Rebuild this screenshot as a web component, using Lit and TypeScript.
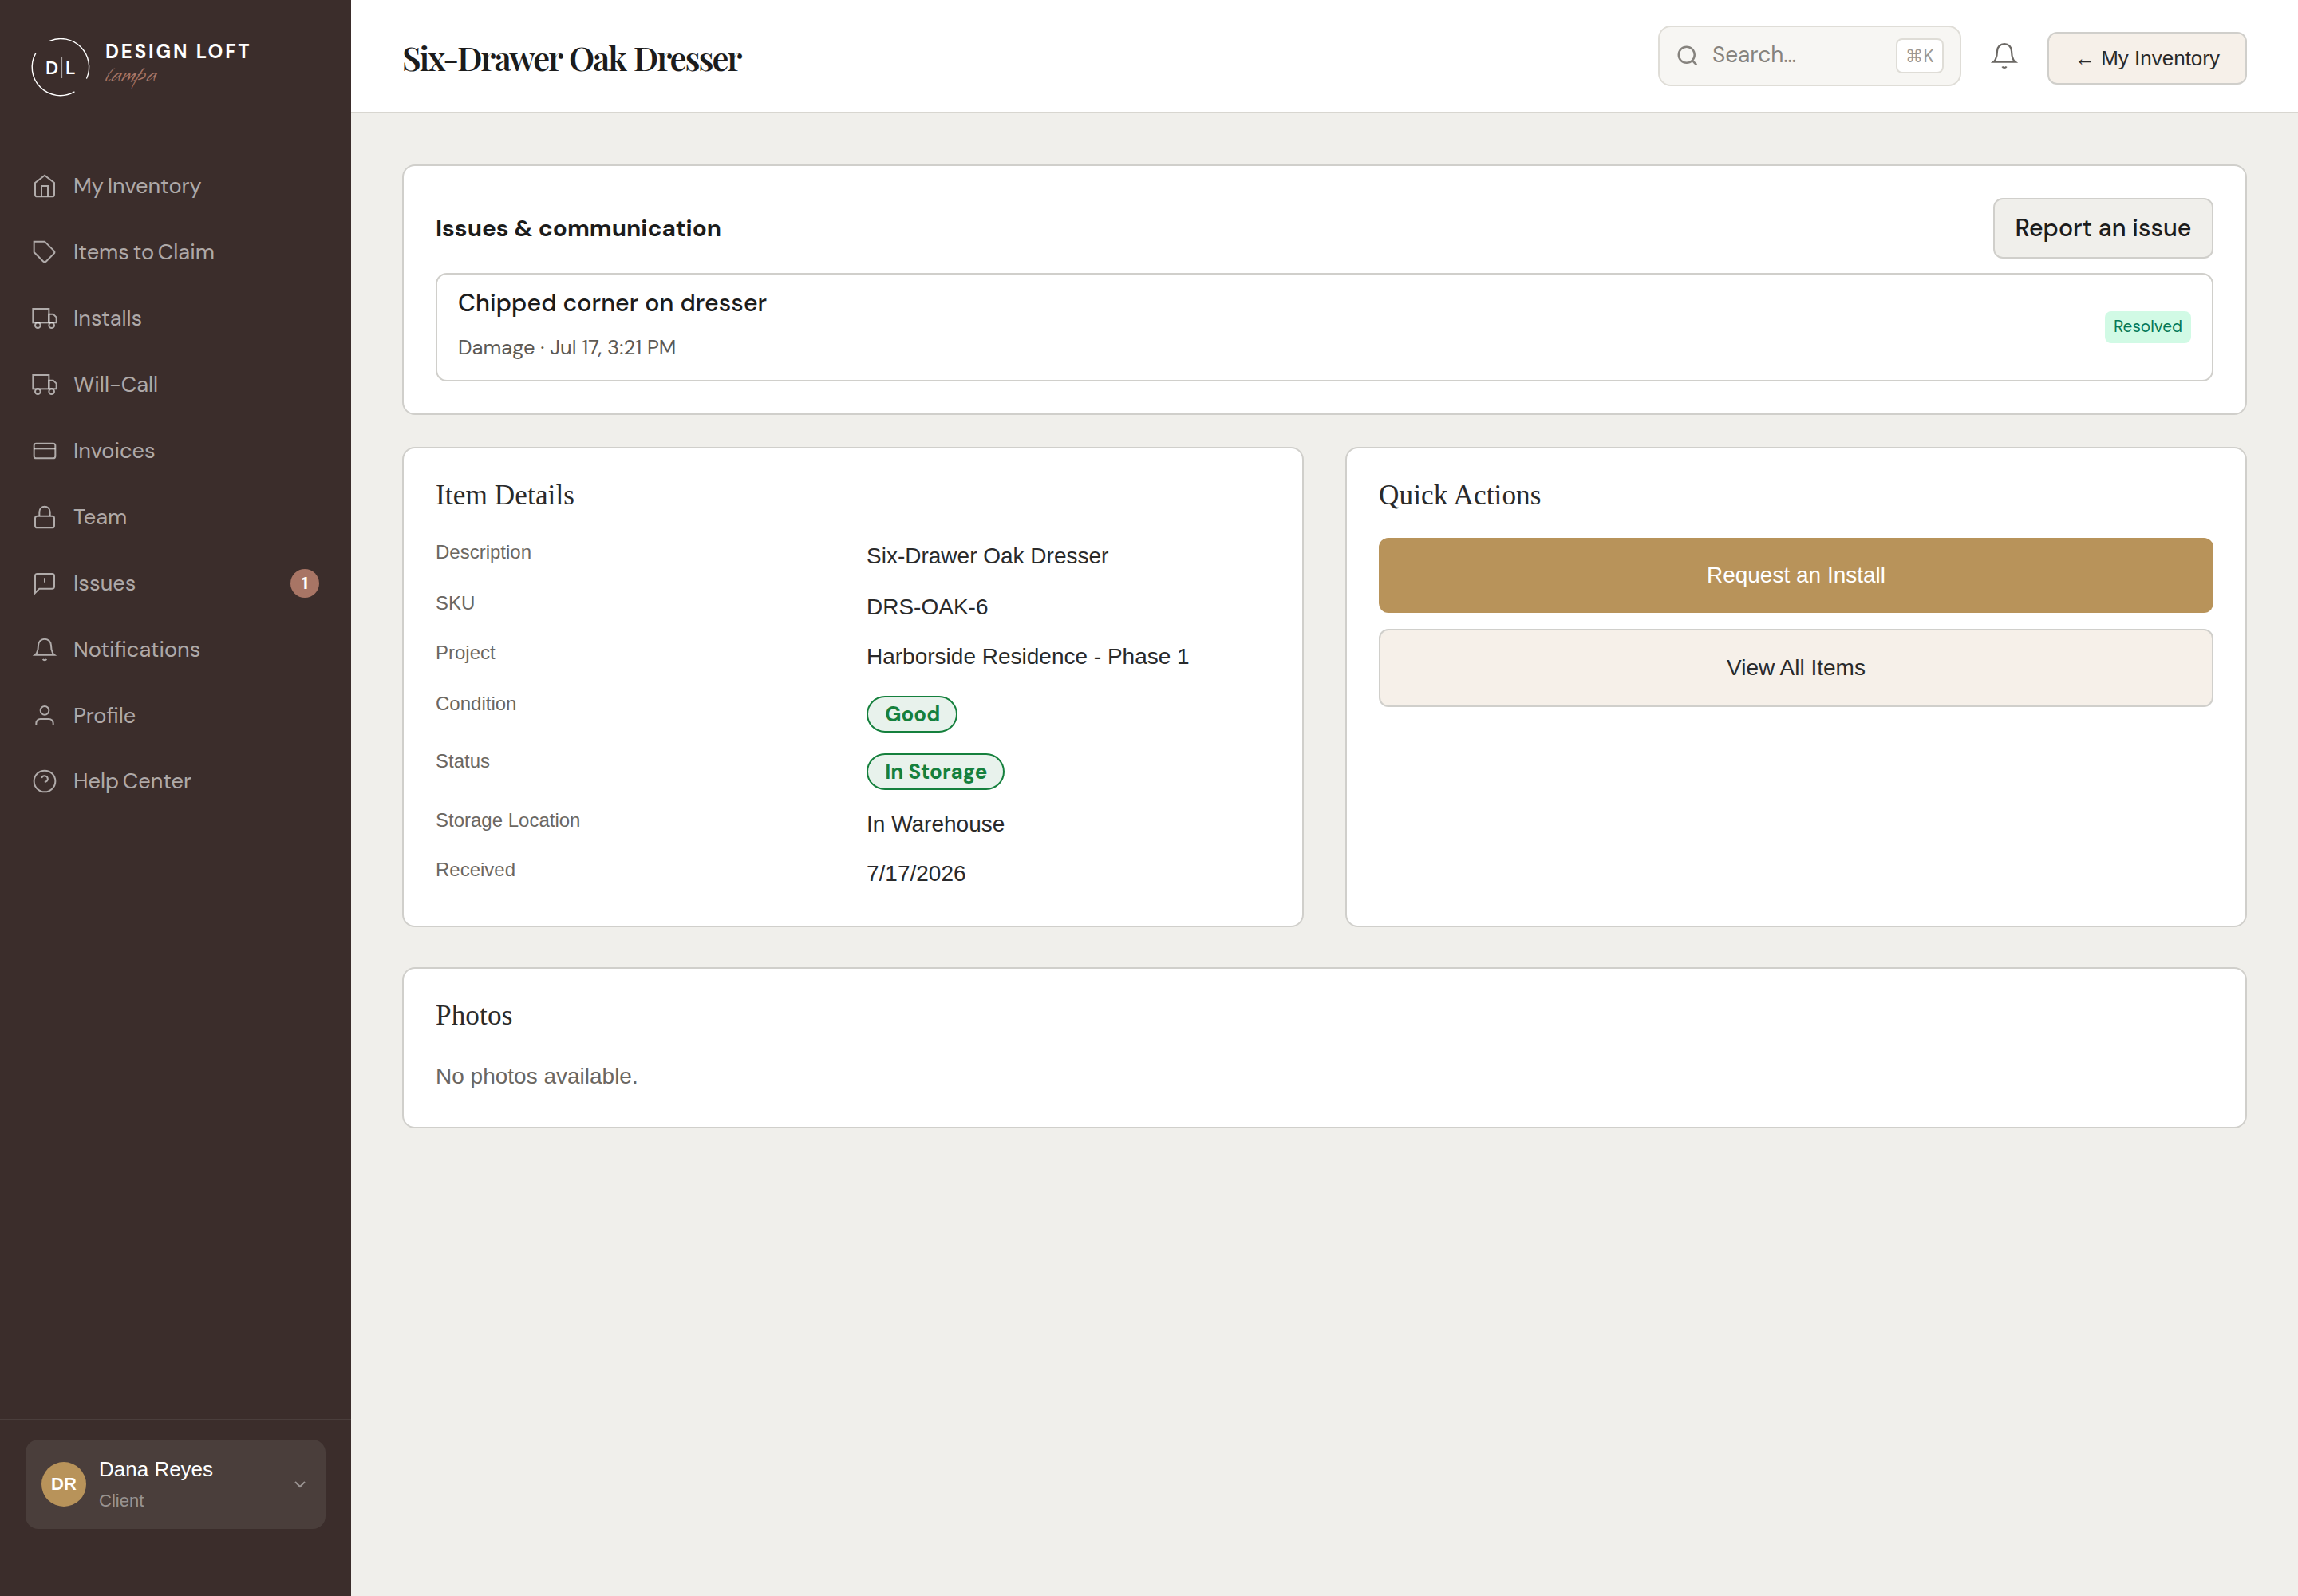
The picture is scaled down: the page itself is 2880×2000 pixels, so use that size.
import { LitElement, html, svg, css } from "lit";

const icons: Record<string, unknown> = {
  home: svg`<path d="M3 9l9-7 9 7v11a2 2 0 0 1-2 2H5a2 2 0 0 1-2-2z"/><polyline points="9 22 9 12 15 12 15 22"/>`,
  tag: svg`<path d="M20.59 13.41l-7.17 7.17a2 2 0 0 1-2.83 0L2 12V2h10l8.59 8.59a2 2 0 0 1 0 2.82z"/>`,
  truck: svg`<rect x="1" y="3" width="15" height="13"/><polygon points="16 8 20 8 23 11 23 16 16 16 16 8"/><circle cx="5.5" cy="18.5" r="2.5"/><circle cx="18.5" cy="18.5" r="2.5"/>`,
  card: svg`<rect x="2" y="5" width="20" height="14" rx="2"/><line x1="2" y1="10" x2="22" y2="10"/>`,
  lock: svg`<rect x="3" y="11" width="18" height="11" rx="2"/><path d="M7 11V7a5 5 0 0 1 10 0v4"/>`,
  issue: svg`<path d="M21 15a2 2 0 0 1-2 2H7l-4 4V5a2 2 0 0 1 2-2h14a2 2 0 0 1 2 2z"/><line x1="12" y1="7" x2="12" y2="11"/>`,
  bell: svg`<path d="M18 8A6 6 0 0 0 6 8c0 7-3 9-3 9h18s-3-2-3-9"/><path d="M13.73 21a2 2 0 0 1-3.46 0"/>`,
  user: svg`<path d="M20 21v-2a4 4 0 0 0-4-4H8a4 4 0 0 0-4 4v2"/><circle cx="12" cy="7" r="4"/>`,
  help: svg`<circle cx="12" cy="12" r="10"/><path d="M9.09 9a3 3 0 0 1 5.83 1c0 2-3 3-3 3"/>`,
  search: svg`<circle cx="11" cy="11" r="8"/><line x1="21" y1="21" x2="16.65" y2="16.65"/>`,
  chevron: svg`<polyline points="6 9 12 15 18 9"/>`,
};

const icon = (name: string, cls: string) =>
  html`<svg class="icon ${cls}" viewBox="0 0 24 24" aria-hidden="true">${icons[name]}</svg>`;

const nav = [
  { icon: "home", label: "My Inventory" },
  { icon: "tag", label: "Items to Claim" },
  { icon: "truck", label: "Installs" },
  { icon: "truck", label: "Will-Call" },
  { icon: "card", label: "Invoices" },
  { icon: "lock", label: "Team" },
  { icon: "issue", label: "Issues", badge: 1 },
  { icon: "bell", label: "Notifications" },
  { icon: "user", label: "Profile" },
  { icon: "help", label: "Help Center" },
];

const details = [
  { label: "Description", value: "Six-Drawer Oak Dresser" },
  { label: "SKU", value: "DRS-OAK-6" },
  { label: "Project", value: "Harborside Residence - Phase 1" },
  { label: "Condition", value: "Good", pill: true },
  { label: "Status", value: "In Storage", pill: true },
  { label: "Storage Location", value: "In Warehouse" },
  { label: "Received", value: "7/17/2026" },
];

class AppRoot extends LitElement {
  static styles = css`
    :host {
      display: block;
      --line: #d0cfcb;
      --gold: #b8935a;
      --clay: #a87565;
      --ui: "DM Sans", "Lato", sans-serif;
      --plain: "Liberation Sans", Arial, sans-serif;
      color: #1c1c1c;
      font-family: var(--plain);
    }
    * { box-sizing: border-box; margin: 0; }
    .icon { display: block; flex: none; fill: none; stroke: currentColor; stroke-width: 1.5; }
    .shell { display: flex; height: 2000px; background: #f0efeb; }

    .side { width: 440px; flex: none; display: flex; flex-direction: column; background: #3b2d2b; color: #fff; }
    .brand { display: flex; align-items: flex-start; gap: 20px; padding: 48px 40px 0; height: 192px; }
    .mark { width: 72px; height: 72px; flex: none; overflow: visible; }
    .mark path { fill: none; stroke: #fff; stroke-width: 1.4; stroke-linecap: round; }
    .mark line { stroke: rgba(255, 255, 255, 0.55); stroke-width: 1.2; }
    .mark text { fill: #fff; font: 600 23px var(--ui); }
    .word { display: flex; flex-direction: column; }
    .name { font: 700 24px/34px var(--ui); letter-spacing: 2.85px; }
    .city { font: 400 35px/24px "Whisper", cursive; color: var(--clay); }
    .menu { display: flex; flex-direction: column; }
    .item { display: flex; align-items: center; gap: 20px; height: 82.9px; padding: 0 40px; color: rgba(255, 255, 255, 0.6); font: 400 27.2px/40px var(--ui); word-spacing: -2.5px; }
    .nav-icon { width: 32px; height: 32px; }
    .count { margin-left: auto; width: 36px; height: 36px; border-radius: 18px; background: var(--clay); color: #fff; font: 700 22px/35px var(--ui); text-align: center; }
    .account { margin-top: auto; height: 222px; border-top: 2px solid #4a3e3c; padding: 24px 32px; }
    .who { display: flex; align-items: center; gap: 16px; height: 112px; padding: 0 20px; border-radius: 16px; background: #4a3e3b; }
    .avatar { width: 56px; height: 56px; border-radius: 50%; background: var(--gold); font: 700 22px/56px var(--plain); text-align: center; }
    .person { flex: 1; display: flex; flex-direction: column; margin-top: 1px; }
    .person-name { font-size: 26px; line-height: 40px; }
    .role { font-size: 22px; line-height: 40px; color: rgba(255, 255, 255, 0.45); }
    .chev { width: 24px; height: 24px; stroke-width: 2; color: rgba(255, 255, 255, 0.45); }

    .body { flex: 1; display: flex; flex-direction: column; min-width: 0; }
    .top { display: flex; flex: none; align-items: center; height: 142px; padding: 0 64px; background: #fff; border-bottom: 2px solid #d8d6d0; }
    .title { font: 600 41.6px/56px "Playfair Display", serif; letter-spacing: -2.05px; word-spacing: 2px; margin: 4px auto 0 0; }
    .search { display: flex; align-items: center; gap: 16px; width: 380px; height: 76px; padding: 0 20px; border: 2px solid #dfddd7; border-radius: 16px; background: #f7f6f3; color: #86837e; font: 400 28px/40px var(--ui); }
    .search-icon { width: 30px; height: 30px; stroke-width: 2; }
    .hint { flex: 1; margin-bottom: 2px; }
    .keys { width: 60px; height: 44px; border: 2px solid #dfddd7; border-radius: 8px; background: #fff; color: #9b9894; font: 400 22.4px/41px var(--ui); text-align: center; }
    .bell { width: 36px; height: 36px; margin: 0 36px; color: #6b6864; }
    .back { margin-top: 6px; height: 66px; padding: 0 32px; border: 2px solid var(--line); border-radius: 12px; background: #f6f0e9; color: #2a2a2a; font: 400 26px/62px var(--plain); }

    .page { display: flex; flex-direction: column; padding: 64px; }
    .panel { border: 2px solid var(--line); border-radius: 16px; background: #fff; padding: 40px; }
    .issues { height: 314px; }
    .issues-head { display: flex; align-items: center; justify-content: space-between; height: 76px; margin-bottom: 18px; }
    .issues-title { font: 700 29.7px/44px var(--ui); }
    .report { width: 276px; height: 76px; border: 2px solid var(--line); border-radius: 12px; background: #f0efeb; color: #1c1c1c; font: 500 30.4px/72px var(--ui); padding: 0; }
    .issue { display: flex; align-items: center; justify-content: space-between; height: 136px; padding: 0 26px; border: 2px solid var(--line); border-radius: 14px; }
    .issue-text { display: flex; flex-direction: column; gap: 10px; margin-bottom: 6px; }
    .issue-name { font: 500 30.4px/48px var(--ui); letter-spacing: 0.08px; }
    .issue-meta { font: 400 25.6px/44px var(--ui); color: #5c5955; }
    .resolved { height: 40px; width: 108px; border-radius: 8px; background: #d1fae5; color: #047857; font: 400 20.8px/37px var(--ui); text-align: center; }

    .pair { display: grid; grid-template-columns: 1fr 1fr; gap: 52px; margin: 40px 0 50px; height: 602px; }
    .heading { font: 400 35.2px/38px "Liberation Serif", "Times New Roman", serif; letter-spacing: 0.1px; color: #2a2a2a; margin-bottom: 34px; }
    .facts { display: grid; grid-template-columns: 1fr 1fr; grid-template-rows: 48px 46px 48px 56px 58px 46px 48px; column-gap: 34px; row-gap: 16px; }
    .key { font-size: 24px; line-height: 35px; color: #6b6762; }
    .value { font-size: 28px; line-height: 45px; color: #2a2a2a; }
    .pill { display: inline-block; margin-top: 8px; height: 46px; padding: 0 20px 0 21.2px; border: 2px solid #15803d; border-radius: 23px; background: #e8f2ec; color: #15803d; font: 700 26px/43px var(--ui); }
    .stack { display: flex; flex-direction: column; gap: 20px; }
    .btn { font: 400 28px/94px var(--plain); height: 94px; border: 0; border-radius: 12px; background: var(--gold); color: #fff; text-align: center; padding: 0; }
    .btn.alt { height: 98px; border: 2px solid var(--line); background: #f6f0e9; color: #2a2a2a; }
    .photos { height: 202px; }
    .empty { font-size: 28px; line-height: 46px; color: #6b6762; }
  `;

  render() {
    return html`
      <div class="shell">
        <aside class="side">
          <div class="brand">
            <svg class="mark" viewBox="0 0 72 72">
              <path d="M22.2 3.3A35.5 35.5 0 0 1 68.7 50"/>
              <path d="M53 67.2A35.5 35.5 0 0 1 4.7 18.9"/>
              <text x="17" y="45">D</text>
              <line x1="37.5" y1="23" x2="37.5" y2="50"/>
              <text x="42" y="45">L</text>
            </svg>
            <div class="word">
              <span class="name">DESIGN LOFT</span>
              <span class="city">tampa</span>
            </div>
          </div>
          <nav class="menu">
            ${nav.map((n) => html`
              <div class="item">
                ${icon(n.icon, "nav-icon")}<span>${n.label}</span>
                ${n.badge ? html`<span class="count">${n.badge}</span>` : ""}
              </div>`)}
          </nav>
          <div class="account">
            <div class="who">
              <span class="avatar">DR</span>
              <div class="person">
                <span class="person-name">Dana Reyes</span>
                <span class="role">Client</span>
              </div>
              ${icon("chevron", "chev")}
            </div>
          </div>
        </aside>
        <div class="body">
          <header class="top">
            <h1 class="title">Six-Drawer Oak Dresser</h1>
            <div class="search">${icon("search", "search-icon")}<span class="hint">Search…</span><span class="keys">⌘K</span></div>
            ${icon("bell", "bell")}
            <button class="back">← My Inventory</button>
          </header>
          <main class="page">
            <section class="panel issues">
              <div class="issues-head">
                <h2 class="issues-title">Issues &amp; communication</h2>
                <button class="report">Report an issue</button>
              </div>
              <div class="issue">
                <div class="issue-text">
                  <span class="issue-name">Chipped corner on dresser</span>
                  <span class="issue-meta">Damage · Jul 17, 3:21 PM</span>
                </div>
                <span class="resolved">Resolved</span>
              </div>
            </section>
            <div class="pair">
              <section class="panel">
                <h2 class="heading">Item Details</h2>
                <div class="facts">
                  ${details.map((d) => html`
                    <span class="key">${d.label}</span>
                    <span class="value">${d.pill ? html`<span class="pill">${d.value}</span>` : d.value}</span>`)}
                </div>
              </section>
              <section class="panel">
                <h2 class="heading">Quick Actions</h2>
                <div class="stack">
                  <button class="btn">Request an Install</button>
                  <button class="btn alt">View All Items</button>
                </div>
              </section>
            </div>
            <section class="panel photos">
              <h2 class="heading">Photos</h2>
              <p class="empty">No photos available.</p>
            </section>
          </main>
        </div>
      </div>
    `;
  }
}
customElements.define("app-root", AppRoot);
